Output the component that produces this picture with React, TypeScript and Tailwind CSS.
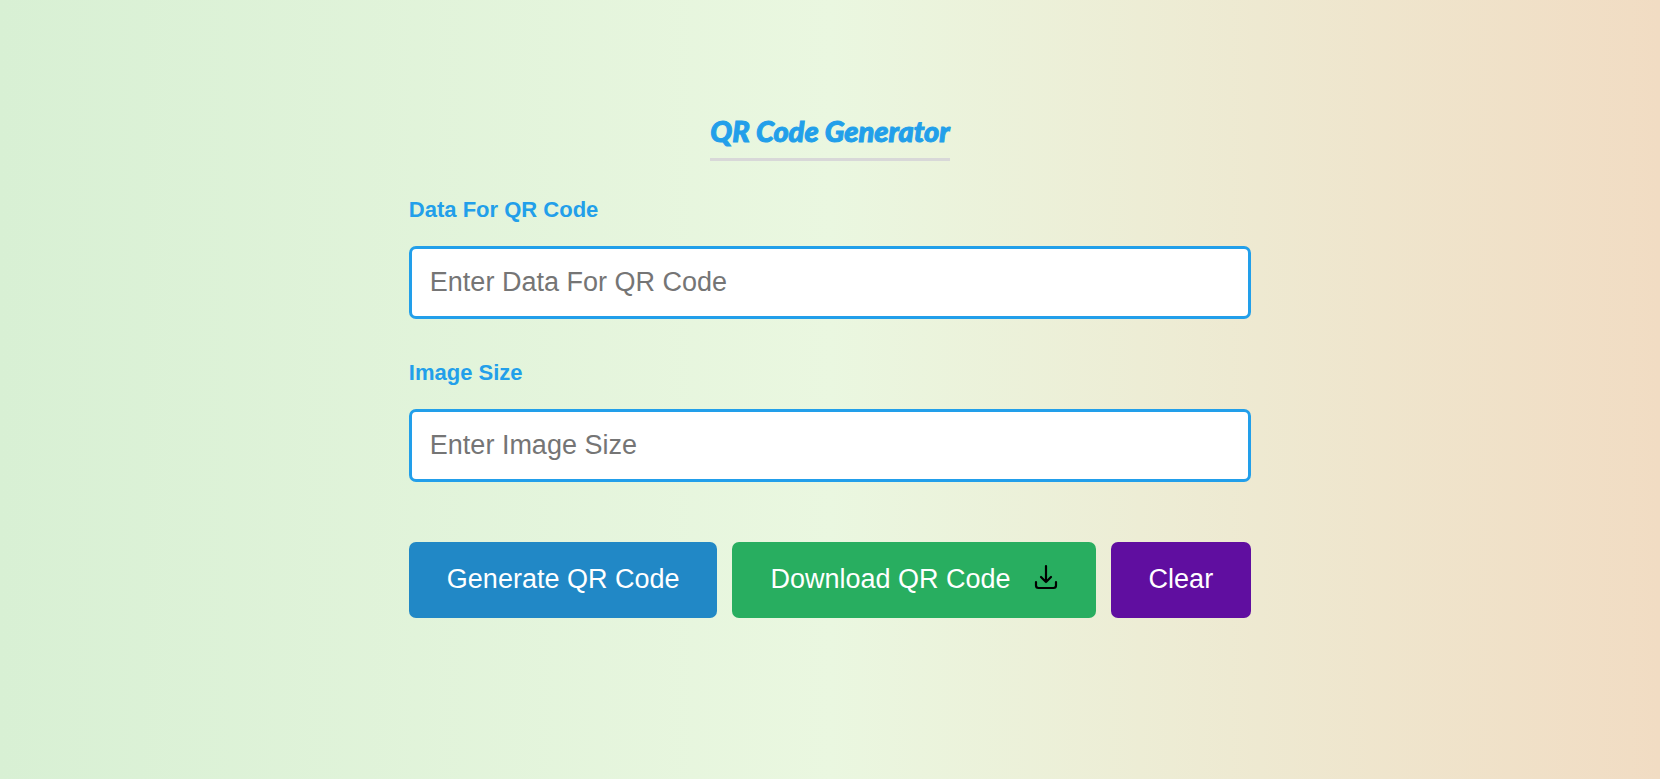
import React, { useState } from "react";

type FieldProps = {
  id: string;
  label: string;
  placeholder: string;
  value: string;
  onChange: (value: string) => void;
};

function Field({ id, label, placeholder, value, onChange }: FieldProps) {
  return (
    <div className="flex flex-col gap-[23px]">
      <label htmlFor={id} className="text-[22px] leading-[26px] font-bold text-[#229fea]">
        {label}
      </label>
      <input
        id={id}
        type="text"
        value={value}
        placeholder={placeholder}
        onChange={(event) => onChange(event.target.value)}
        className="w-full rounded-[7px] border-3 border-[#229fea] bg-white px-[18px] py-[17px] text-[27px] leading-[33px] text-[#222222] outline-none placeholder:text-[#757575]"
      />
    </div>
  );
}

function DownloadIcon() {
  return (
    <svg
      width="24"
      height="26"
      viewBox="0 0 24 26"
      fill="none"
      stroke="black"
      strokeWidth="2.2"
      strokeLinecap="round"
      strokeLinejoin="round"
      aria-hidden="true"
      className="mb-1"
    >
      <path d="M12 2v16M7 13l5 5 5-5" />
      <path d="M2 18v3.5a2.5 2.5 0 0 0 2.5 2.5h15a2.5 2.5 0 0 0 2.5-2.5V18" />
    </svg>
  );
}

export default function App() {
  const [data, setData] = useState("");
  const [size, setSize] = useState("");

  const clear = () => {
    setData("");
    setSize("");
  };

  return (
    <main className="flex min-h-screen flex-col items-center bg-linear-to-r from-[#d8f0d4] via-[#eaf7e0] to-[#f1dcc3] px-4 pt-[112px] pb-16 font-['Liberation_Sans',Arial,sans-serif]">
      <h1 className="border-b-3 border-[#d8d8d8] pb-2 font-['Lato',cursive] text-[29px] leading-[38px] font-black text-[#229fea] italic [-webkit-text-stroke:1px_#229fea]">
        QR Code Generator
      </h1>
      <form className="mt-9 flex w-full flex-col gap-[41px] md:w-fit" onSubmit={(event) => event.preventDefault()}>
        <Field id="qr-data" label="Data For QR Code" placeholder="Enter Data For QR Code" value={data} onChange={setData} />
        <Field id="qr-size" label="Image Size" placeholder="Enter Image Size" value={size} onChange={setSize} />
        <div className="mt-[19px] flex flex-wrap gap-[15px] text-[27px] leading-9 text-white">
          <button type="submit" className="rounded-[7px] bg-[#2188c6] px-[38px] pt-[19px] pb-[21px]">
            Generate QR Code
          </button>
          <button type="button" className="flex items-center gap-[23px] rounded-[7px] bg-[#28ae60] px-[38px] pt-[19px] pb-[21px]">
            Download QR Code
            <DownloadIcon />
          </button>
          <button type="button" onClick={clear} className="rounded-[7px] bg-[#600ea0] px-[38px] pt-[19px] pb-[21px]">
            Clear
          </button>
        </div>
      </form>
    </main>
  );
}
